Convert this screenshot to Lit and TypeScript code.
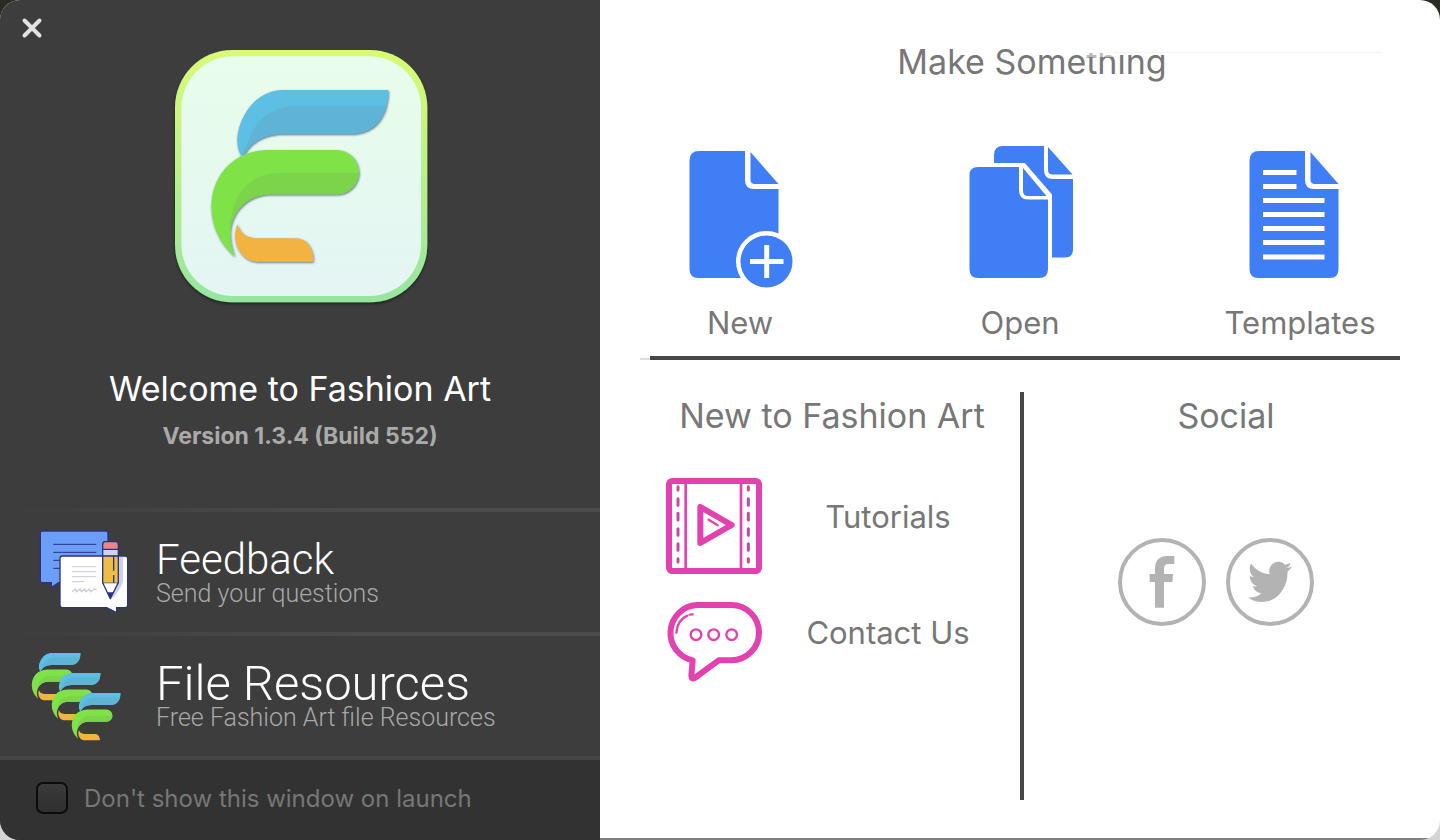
import { LitElement, html, svg, css } from "lit";
import { customElement, state } from "lit/decorators.js";

const swoosh = svg`
  <path fill="#5dbfe3" d="M248 368C226 340 226 290 252 242C280 190 322 165 372 165H685C685 242 645 296 575 296H370C310 297 270 320 248 368Z"/>
  <path fill="#5fb4d6" d="M264 322C285 245 350 212 410 212H679C666 265 630 296 575 296H370C310 298 270 320 248 368C246 350 256 336 264 322Z"/>
  <path fill="#7fe347" d="M225 665C148 600 138 500 175 430C205 375 262 345 325 345H530A66 66 0 0 1 530 478H325C250 482 180 550 225 665Z"/>
  <path fill="#7bd44b" d="M220 520C240 445 300 413 365 413H596A66 66 0 0 1 530 478H325C262 482 216 530 210 590C208 565 212 545 220 520Z"/>
  <path fill="#f2b340" d="M232 568C240 596 262 610 292 610H405C440 610 460 636 460 680H290C240 676 212 620 232 568Z"/>`;

const docBody = svg`
  <path d="M19 11H65V40Q65 49 74 49H98.500V129Q98.500 138 89.500 138H18.500Q9.500 138 9.500 129V20.500Q9.500 11 19 11Z"/>
  <path d="M70.500 12L98.500 44H75Q70.500 44 70.500 39.500Z"/>`;

const newIcon = svg`<svg class="doc" viewBox="0 0 120 150" aria-hidden="true"><g fill="#3f7ef4">${docBody}</g>
  <circle cx="86.500" cy="121.500" r="30.500" fill="#fff"/><circle cx="86.500" cy="121.500" r="26" fill="#3f7ef4"/>
  <path d="M70 121.500H103.500M86.700 105V138" stroke="#fff" stroke-width="5"/></svg>`;
const openIcon = svg`<svg class="doc" viewBox="0 0 120 150" aria-hidden="true"><g fill="#3f7ef4">
  <path d="M43 6H84V30Q84 39 93 39H113V109Q113 117.500 105 117.500H34V15Q34 6 43 6Z"/>
  <path d="M88 7L112.500 34.500H93Q88 34.500 88 30Z"/>
  <path d="M18 27H63L88 56V129Q88 138 79 138H18Q9.500 138 9.500 129V35Q9.500 27 18 27Z" fill="#fff" stroke="#fff" stroke-width="8"/>
  <path d="M18 27H59V50Q59 59.500 68 59.500H88V129Q88 138 79 138H18Q9.500 138 9.500 129V35Q9.500 27 18 27Z"/>
  <path d="M63 28L86.500 56H68Q63 56 63 51Z"/></g></svg>`;
const templateIcon = svg`<svg class="doc" viewBox="0 0 120 150" aria-hidden="true"><g fill="#3f7ef4">${docBody}</g>
  <path d="M23 32.500H56.500M23 46.500H56.500M23 60.500H84.500M23 74.500H84.500M23 88.500H84.500M23 102.500H84.500M23 117H84.500" stroke="#fff" stroke-width="5"/></svg>`;

@customElement("app-root")
export class AppRoot extends LitElement {
  @state() private hideOnLaunch = false;

  static styles = css`
    :host {
      display: block;
      min-height: 100vh;
      background: linear-gradient(#2b2a24 50%, #d4d4d4 50%);
      font-family: Inter, "Liberation Sans", sans-serif;
      color: #777;
    }
    * { box-sizing: border-box; }
    h1, h2, p { margin: 0; font-weight: 400; }
    a { color: inherit; text-decoration: none; }
    button { border: 0; padding: 0; background: none; font: inherit; color: inherit; cursor: pointer; }
    svg { display: block; }

    .window {
      min-height: 100vh;
      display: grid;
      grid-template-columns: 5fr 7fr;
      border-radius: 20px;
      overflow: hidden;
      background: #fff;
    }
    .side { display: flex; flex-direction: column; background: #3d3d3d; }
    .bar { height: 35px; padding: 17px 0 0 21px; }
    .close { display: block; }
    .brand { flex: 1; display: flex; flex-direction: column; align-items: center; }
    .app-icon { width: 280px; height: 280px; }
    .brand h1 { margin-top: 50px; color: #fff; font-size: 34px; line-height: 48px; }
    .version { margin-top: 9px; color: #aaa; font-size: 23px; line-height: 28px; font-weight: 700; }

    .link {
      display: flex;
      align-items: center;
      gap: 26px;
      height: 124px;
      padding: 4px 30px 0;
      background: linear-gradient(90deg, #3d3d3d, #4b4b4b 60%) top / 100% 4px no-repeat;
    }
    .link svg { width: 100px; height: 100px; flex: none; }
    .link-text { display: flex; flex-direction: column; font-family: Roboto, "Liberation Sans", sans-serif; font-weight: 300; }
    .link-title { color: #fff; font-size: 42px; line-height: 44px; }
    .link-title.large { font-size: 49px; }
    .link-note { color: #a8a8a8; font-size: 25px; line-height: 24px; }
    .launch {
      display: flex;
      align-items: center;
      gap: 16px;
      height: 84px;
      padding: 0 36px 4px;
      border-top: 4px solid #464646;
      background: #323232;
      font-size: 24px;
      color: #777;
    }
    .launch input {
      appearance: none;
      width: 32px;
      height: 32px;
      margin: 0;
      border: 2px solid #0b0b0b;
      border-radius: 7px;
      background: linear-gradient(#3a3a3a, #2f2f2f);
    }
    .launch input:checked { background: #3f7ef4; }

    .main { display: flex; flex-direction: column; border-bottom: 2px solid #808080; }
    .main h2 { font-size: 34px; line-height: 44px; text-align: center; }
    .make { padding-top: 40px; }
    .make h2 { padding-left: 24px; }
    .sheen { position: relative; }
    .sheen::before, .sheen::after { content: ""; position: absolute; left: 0; }
    .sheen::before { top: 0; width: 296px; height: 12px; border-bottom: 1px solid #f3f3f3; background: #fff; }
    .sheen::after { top: 12px; width: 28px; height: 5px; background: #fff; opacity: 0.5; }
    .sheen { display: inline-block; }
    .actions { display: grid; grid-template-columns: repeat(3, 1fr); padding-top: 56px; }
    .action { display: flex; flex-direction: column; align-items: center; gap: 13px; font-size: 31px; line-height: 40px; }
    .doc { width: 120px; height: 150px; }
    .rule {
      height: 4px;
      border: 0;
      margin: 13px 40px 0;
      background:
        linear-gradient(#48484a, #48484a) 10px 0 no-repeat,
        linear-gradient(#ddd, #ddd) 0 2px / 10px 2px no-repeat;
    }
    .lower { flex: 1; display: grid; grid-template-columns: 380px 4px 1fr; padding: 32px 0 38px 40px; }
    .divider { background: #48484a; }
    .learn { display: flex; flex-direction: column; gap: 20px; }
    .learn h2 { padding: 2px 0 20px 4px; }
    .item { display: grid; grid-template-columns: 96px 1fr; margin: 0 6px 0 26px; font-size: 31px; line-height: 40px; }
    .item svg { width: 96px; height: 96px; }
    .item span { align-self: center; justify-self: center; padding-bottom: 18px; }
    .social { padding: 2px 12px 0 0; }
    .networks { display: flex; justify-content: center; gap: 20px; padding: 100px 20px 0 0; }
    .networks svg { width: 88px; height: 88px; }
  `;

  render() {
    return html`
      <div class="window">
        <aside class="side">
          <div class="bar">
            <button class="close" aria-label="Close">
              <svg width="22" height="22" viewBox="0 0 22 22"><path d="M3.500 3.500L18.500 18.500M18.500 3.500L3.500 18.500" stroke="#e2e2e2" stroke-width="4" stroke-linecap="round"/></svg>
            </button>
          </div>
          <div class="brand">
            <svg class="app-icon" viewBox="0 0 840 840" aria-hidden="true">
              <defs>
                <linearGradient id="rim" x2="0" y2="1"><stop offset="0" stop-color="#d9fb74"/><stop offset="1" stop-color="#95e6a0"/></linearGradient>
                <linearGradient id="face" x2="0" y2="1"><stop offset="0" stop-color="#e8fdea"/><stop offset="1" stop-color="#e4f5f4"/></linearGradient>
                <filter id="drop" x="-10%" y="-10%" width="120%" height="120%"><feDropShadow dx="0" dy="5" stdDeviation="5" flood-opacity="0.5"/></filter>
                <filter id="edge" x="-10%" y="-10%" width="120%" height="120%"><feDropShadow dx="2" dy="3" stdDeviation="3" flood-color="#34506a" flood-opacity="0.8"/></filter>
              </defs>
              <rect x="45" y="45" width="757" height="757" rx="172" fill="url(#rim)" filter="url(#drop)"/>
              <rect x="64" y="64" width="719" height="719" rx="155" fill="url(#face)"/>
              <g filter="url(#edge)">${swoosh}</g>
            </svg>
            <h1>Welcome to Fashion Art</h1>
            <p class="version">Version 1.3.4 (Build 552)</p>
          </div>
          <a class="link" href="#feedback">
            <svg viewBox="0 0 300 300" aria-hidden="true"><g transform="translate(-90 -66)">
              <path d="M127 93H318Q324 93 324 99V248H176L154 263V248H127Q121 248 121 242V99Q121 93 127 93Z" fill="#6c9df8" stroke="#2a3380" stroke-width="4"/>
              <path d="M160 133H289M160 157H289M160 181H200M160 205H200" stroke="#2a3380" stroke-width="3"/>
              <path d="M187 168H376Q383 168 383 175V316Q383 323 376 323H350V338L320 323H187Q180 323 180 316V175Q180 168 187 168Z" fill="#fff" stroke="#2a3380" stroke-width="4"/>
              <path d="M356 171H369V245Q355 280 334 296L356 248Z" fill="#cdd0e8"/>
              <path d="M216 200H289M216 215H289M216 230H289M216 245H253" stroke="#c9cbdc" stroke-width="3"/>
              <path d="M216 275L226 267L230 275L240 267L244 275L254 267L258 275L268 267L272 275L282 267L290 270" stroke="#c9cbdc" stroke-width="4" fill="none"/>
              <path d="M308 248L331 296L355 248Z" fill="#fff" stroke="#2a3380" stroke-width="4" stroke-linejoin="round"/>
              <path d="M322 277H341L331 296Z" fill="#2a3380"/>
              <path d="M308 166H355V248H308Z" fill="#eebd42"/>
              <path d="M308 148H355V166H308Z" fill="#cdd3ea"/>
              <path d="M308 148V133Q308 125 316 125H347Q355 125 355 133V148Z" fill="#ee8585"/>
              <path d="M308 250V133Q308 125 316 125H347Q355 125 355 133V250M308 148H355M308 168H355M341 170V212M341 225V248" fill="none" stroke="#2a3380" stroke-width="4"/>
            </g></svg>
            <span class="link-text"><span class="link-title">Feedback</span><span class="link-note">Send your questions</span></span>
          </a>
          <a class="link" href="#resources">
            <svg viewBox="0 0 100 100" aria-hidden="true">
              ${[0, 20, 40].map((d) => svg`<g transform="translate(${d - 12.4} ${d - 8.2}) scale(0.092)">${swoosh}</g>`)}
            </svg>
            <span class="link-text"><span class="link-title large">File Resources</span><span class="link-note">Free Fashion Art file Resources</span></span>
          </a>
          <label class="launch">
            <input type="checkbox" .checked=${this.hideOnLaunch} @change=${(e: Event) => (this.hideOnLaunch = (e.target as HTMLInputElement).checked)} />
            <span>Don't show this window on launch</span>
          </label>
        </aside>
        <main class="main">
          <section class="make">
            <h2>Make Some<span class="sheen">thing</span></h2>
            <div class="actions">
              <button class="action">${newIcon}<span>New</span></button>
              <button class="action">${openIcon}<span>Open</span></button>
              <button class="action">${templateIcon}<span>Templates</span></button>
            </div>
            <hr class="rule" />
          </section>
          <div class="lower">
            <section class="learn">
              <h2>New to Fashion Art</h2>
              <a class="item" href="#tutorials">
                <svg viewBox="0 0 288 288" fill="none" stroke="#e340b0" aria-hidden="true">
                  <rect x="9" y="9" width="270" height="270" rx="10" stroke-width="18"/>
                  <path d="M59 18V270M225 18V270" stroke-width="8"/>
                  <path d="M36 26V36M36 62V82M36 106V126M36 152V172M36 197V217M36 242V252M247 26V36M247 62V82M247 106V126M247 152V172M247 197V217M247 242V252" stroke="#c9479f" stroke-width="9" stroke-linecap="round"/>
                  <path d="M103 87V195L197 141Z" stroke-width="18" stroke-linejoin="round"/>
                  <path d="M128 125L155 142" stroke-width="7" stroke-linecap="round"/>
                </svg>
                <span>Tutorials</span>
              </a>
              <a class="item" href="#contact">
                <svg viewBox="0 0 288 288" fill="none" stroke="#e340b0" stroke-width="18" stroke-linejoin="round" aria-hidden="true">
                  <path d="M92 33H196A83 83 0 0 1 196 199H158L86 252Q76 256 76 246L80 199A84 84 0 0 1 92 33Z"/>
                  <path d="M31 116Q34 78 64 65M71 62L80 61" stroke-width="7" stroke-linecap="round"/>
                  <g stroke-width="7"><circle cx="90" cy="122" r="16"/><circle cx="143" cy="122" r="16"/><circle cx="197" cy="122" r="16"/></g>
                </svg>
                <span>Contact Us</span>
              </a>
            </section>
            <div class="divider"></div>
            <section class="social">
              <h2>Social</h2>
              <div class="networks">
                <a href="#facebook" aria-label="Facebook"><svg viewBox="0 0 264 264">
                  <circle cx="132" cy="132" r="126" fill="none" stroke="#b3b3b3" stroke-width="12"/>
                  <path fill="#b3b3b3" d="M111 209V132H95V108H111V92C111 66 126 54 148 54H169V78H152C142 78 138 83 138 93V108H165L163 132H138V209Z"/></svg></a>
                <a href="#twitter" aria-label="Twitter"><svg viewBox="0 0 264 264">
                  <circle cx="132" cy="132" r="126" fill="none" stroke="#b3b3b3" stroke-width="12"/>
                  <path fill="#b3b3b3" transform="translate(66 57) scale(5.500 6.200)" d="M23.953 4.570a10 10 0 01-2.825.775 4.958 4.958 0 002.163-2.723c-.951.555-2.005.959-3.127 1.184a4.920 4.920 0 00-8.384 4.482C7.690 8.095 4.067 6.130 1.640 3.162a4.822 4.822 0 00-.666 2.475c0 1.710.870 3.213 2.188 4.096a4.904 4.904 0 01-2.228-.616v.060a4.923 4.923 0 003.946 4.827 4.996 4.996 0 01-2.212.085 4.936 4.936 0 004.604 3.417 9.867 9.867 0 01-6.102 2.105c-.390 0-.779-.023-1.170-.067a13.995 13.995 0 007.557 2.209c9.053 0 13.998-7.496 13.998-13.985 0-.210 0-.420-.015-.630A9.935 9.935 0 0024 4.590z"/></svg></a>
              </div>
            </section>
          </div>
        </main>
      </div>
    `;
  }
}
